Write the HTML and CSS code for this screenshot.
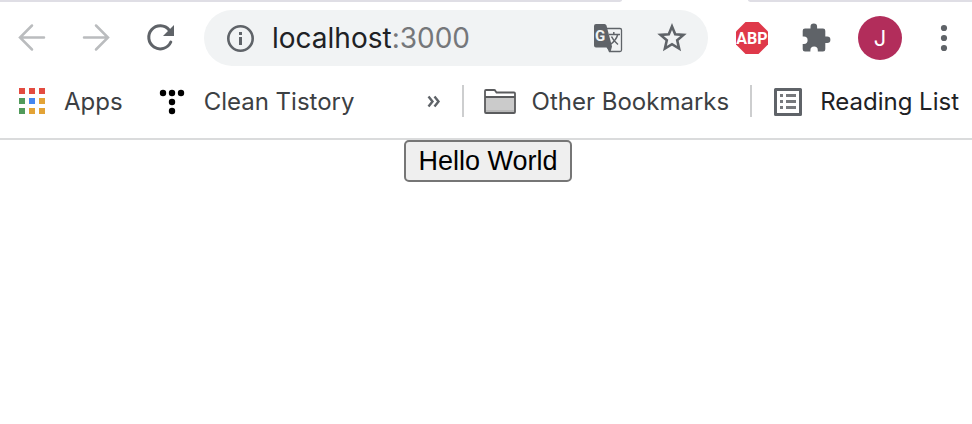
FILE: index.html
```html
<!DOCTYPE html>
<html lang="en">
<head>
    <meta charset="UTF-8">
    <meta name="viewport" content="width=device-width, initial-scale=1.0">
    <title>localhost:3000</title>
    <link rel="stylesheet" href="styles.css">
</head>
<body>
    <header class="browser">
        <div class="tab-strip">
            <div class="tabs-left"></div>
            <div class="tabs-right"></div>
        </div>

        <div class="toolbar">
            <nav class="nav-buttons">
                <button type="button" class="icon-button muted" aria-label="Back">
                    <svg viewBox="0 0 32 32"><path d="M28 15.500H4.500M16 3.500l-12 12 12 12" fill="none" stroke="currentColor" stroke-width="2.500" stroke-linecap="round"/></svg>
                </button>
                <button type="button" class="icon-button muted" aria-label="Forward">
                    <svg viewBox="0 0 32 32"><path d="M4 15.500h23.500M16 3.500l12 12-12 12" fill="none" stroke="currentColor" stroke-width="2.500" stroke-linecap="round"/></svg>
                </button>
                <button type="button" class="icon-button" aria-label="Reload">
                    <svg viewBox="0 0 32 32"><path d="M25.300 8.200A11.500 11.500 0 1 0 26.800 20" fill="none" stroke="currentColor" stroke-width="3" stroke-linecap="round"/><path d="M30 3v11H19z" fill="currentColor"/></svg>
                </button>
            </nav>

            <div class="address-bar">
                <button type="button" class="icon-button" aria-label="View site information">
                    <svg viewBox="0 0 32 32"><circle cx="16.500" cy="16.500" r="12.200" fill="none" stroke="currentColor" stroke-width="2.600"/><path d="M15 10h3v3h-3zM15 15h3v8h-3z" fill="currentColor"/></svg>
                </button>
                <div class="url">localhost<span class="port">:3000</span></div>
                <button type="button" class="icon-button" aria-label="Translate this page">
                    <svg viewBox="0 0 32 32">
                        <path d="M13 6.500h15q1.500 0 1.500 1.500v20q0 1.500-1.500 1.500H17.500l-4-9" fill="#f1f3f4" stroke="currentColor" stroke-width="1.300"/>
                        <path d="M4 2h8.500q1.500 0 2 1.500L20 24.500l-1.500 5.500-4-4.500H4q-2 0-2-2V4q0-2 2-2z" fill="currentColor"/>
                        <path d="M17 12.500h11M21.800 10v2.500M25.800 12.500q-1.800 6-7.500 10M19.500 14.500q2 4.500 6.500 8" fill="none" stroke="currentColor" stroke-width="1.500"/>
                        <text x="3" y="19" class="translate-letter">G</text>
                    </svg>
                </button>
                <button type="button" class="icon-button" aria-label="Bookmark this tab">
                    <svg viewBox="0 0 32 32"><path d="M16 4.500l3.200 7.700 8.300.700-6.300 5.400 1.900 8.200-7.100-4.300-7.100 4.300 1.900-8.200-6.300-5.400 8.300-.700z" fill="none" stroke="currentColor" stroke-width="2.600"/></svg>
                </button>
            </div>

            <div class="extensions">
                <button type="button" class="icon-button" aria-label="Adblock Plus">
                    <svg viewBox="0 0 32 32"><path d="M9.500 0h13L32 9.500v13L22.500 32h-13L0 22.500v-13z" fill="#df394a"/><text x="16" y="22" class="abp-letters">ABP</text></svg>
                </button>
                <button type="button" class="icon-button" aria-label="Extensions">
                    <svg viewBox="0 0 32 32"><path d="M5 6.500h5.500V4.800a3.300 3.300 0 0 1 6.600 0v1.700H23q2.300 0 2.300 2.300v5.800h1.900a3.200 3.200 0 0 1 0 6.400h-1.900v6.200q0 2.300-2.300 2.300h-5.200v-1.200a3.700 3.700 0 0 0-7.400 0v1.200H5q-2.300 0-2.300-2.300v-5.200h1.200a3.700 3.700 0 0 0 0-7.400H2.700V8.800Q2.700 6.500 5 6.500z" fill="currentColor"/></svg>
                </button>
            </div>

            <button type="button" class="avatar" aria-label="Profile">J</button>

            <button type="button" class="icon-button" aria-label="Menu">
                <svg viewBox="0 0 32 32"><g fill="currentColor"><circle cx="16" cy="6" r="3.100"/><circle cx="16" cy="16" r="3.100"/><circle cx="16" cy="26" r="3.100"/></g></svg>
            </button>
        </div>

        <nav class="bookmarks">
            <a class="bookmark" href="#">
                <svg viewBox="0 0 32 32">
                    <path d="M3 3h6v6H3zM13 3h6v6h-6zM23 3h6v6h-6z" fill="#e34b40"/>
                    <path d="M3 13h6v6H3zM3 23h6v6H3z" fill="#519a5b"/>
                    <path d="M13 13h6v6h-6z" fill="#4486f0"/>
                    <path d="M23 13h6v6h-6zM13 23h6v6h-6zM23 23h6v6h-6z" fill="#e3a336"/>
                </svg>
                Apps
            </a>
            <a class="bookmark" href="#">
                <svg viewBox="0 0 32 32"><g fill="#000"><circle cx="7" cy="8" r="3.200"/><circle cx="16" cy="8" r="3.200"/><circle cx="25" cy="8" r="3.200"/><circle cx="16" cy="17" r="3.200"/><circle cx="16" cy="26" r="3.200"/></g></svg>
                Clean Tistory
            </a>
            <div class="bookmarks-end">
                <button type="button" class="overflow" aria-label="More bookmarks">
                    <svg viewBox="0 0 16 32"><path d="M2.500 11.500l4 5-4 5M8.500 11.500l4 5-4 5" fill="none" stroke="currentColor" stroke-width="2.400"/></svg>
                </button>
                <a class="bookmark folder" href="#">
                    <svg viewBox="0 0 32 32"><path d="M1 12h30v16H1z" fill="#cbcbcb"/><path d="M1 25h30v3H1z" fill="#b8b8b8"/><path d="M1 12h30M1 27V6q0-1 1-1h8q1 0 1.500 1l1 1.500H30q1 0 1 1V27q0 1-1 1H2q-1 0-1-1z" fill="none" stroke="#5a5b5d" stroke-width="1.800"/></svg>
                    Other Bookmarks
                </a>
                <a class="bookmark reading" href="#">
                    <svg viewBox="0 0 32 32"><path d="M3.500 4.500h25v25h-25z" fill="none" stroke="#5f6368" stroke-width="3" stroke-linejoin="round"/><path d="M8 9h3v3H8zM8 15h3v3H8zM8 21h3v3H8zM14 9h10v3H14zM14 15h10v3H14zM14 21h10v3H14z" fill="#77797d"/></svg>
                    Reading List
                </a>
            </div>
        </nav>
    </header>

    <main class="page">
        <button type="button" class="hello">Hello World</button>
    </main>
</body>
</html>
```

FILE: styles.css
```css
body {
    margin: 0;
    background-color: #fff;
    font-family: Inter, sans-serif;
}
button {
    font: inherit;
    padding: 0;
    border: none;
    background: none;
}
svg {
    display: block;
    flex: none;
    width: 32px;
    height: 32px;
}
.browser {
    color: #5f6368;
    border-bottom: 2px solid #dadbdc;
}
.tab-strip {
    display: grid;
    grid-template-columns: 64% 1fr;
    column-gap: 13%;
    height: 2px;
}
.tabs-left,
.tabs-right {
    background-color: #dfdee5;
}
.tabs-left {
    border-bottom-right-radius: 4px 2px;
}
.tabs-right {
    border-bottom-left-radius: 4px 2px;
}
.toolbar {
    display: flex;
    align-items: center;
    height: 72px;
    padding: 0 12px 0 16px;
}
.nav-buttons,
.extensions {
    display: flex;
    gap: 32px;
}
.icon-button {
    flex: none;
    color: inherit;
}
.muted {
    color: #babcbe;
}
.address-bar {
    display: flex;
    align-items: center;
    flex: 1;
    height: 56px;
    margin: 0 28px;
    padding: 0 20px;
    box-sizing: border-box;
    border-radius: 28px;
    background-color: #f1f3f4;
    gap: 32px;
}
.url {
    flex: 1;
    margin-left: -16px;
    font-size: 28px;
    color: #202124;
}
.port {
    color: #75777a;
}
.translate-letter {
    font: bold 15px Roboto, sans-serif;
    fill: #f1f3f4;
}
.abp-letters {
    font: bold 16px Roboto, sans-serif;
    text-anchor: middle;
    fill: #fff;
}
.avatar {
    width: 44px;
    height: 44px;
    margin: 0 26px;
    border-radius: 50%;
    background-color: #b22d5b;
    color: #fff;
    font-size: 22px;
}
.bookmarks {
    display: flex;
    align-items: center;
    gap: 33px;
    height: 54px;
    padding: 0 13px 10px 16px;
    font-size: 24px;
}
.bookmark {
    display: flex;
    align-items: center;
    gap: 16px;
    color: #3c4043;
    text-decoration: none;
    white-space: nowrap;
}
.bookmarks-end {
    display: flex;
    align-items: center;
    margin-left: auto;
}
.overflow {
    margin-right: 20px;
    color: #5f6368;
}
.overflow svg {
    width: 16px;
}
.folder,
.reading {
    height: 32px;
    padding-left: 20px;
    border-left: 2px solid #cdcecf;
}
.folder {
    padding-right: 21px;
}
.reading {
    color: #202124;
}
.page {
    padding-left: 4px;
    text-align: center;
}
.hello {
    height: 42px;
    padding: 0 12px;
    border: 2px solid #767676;
    border-radius: 5px;
    background-color: #efefef;
    color: #000;
    font-family: "Liberation Sans", Arial, sans-serif;
    font-size: 27px;
}
```
